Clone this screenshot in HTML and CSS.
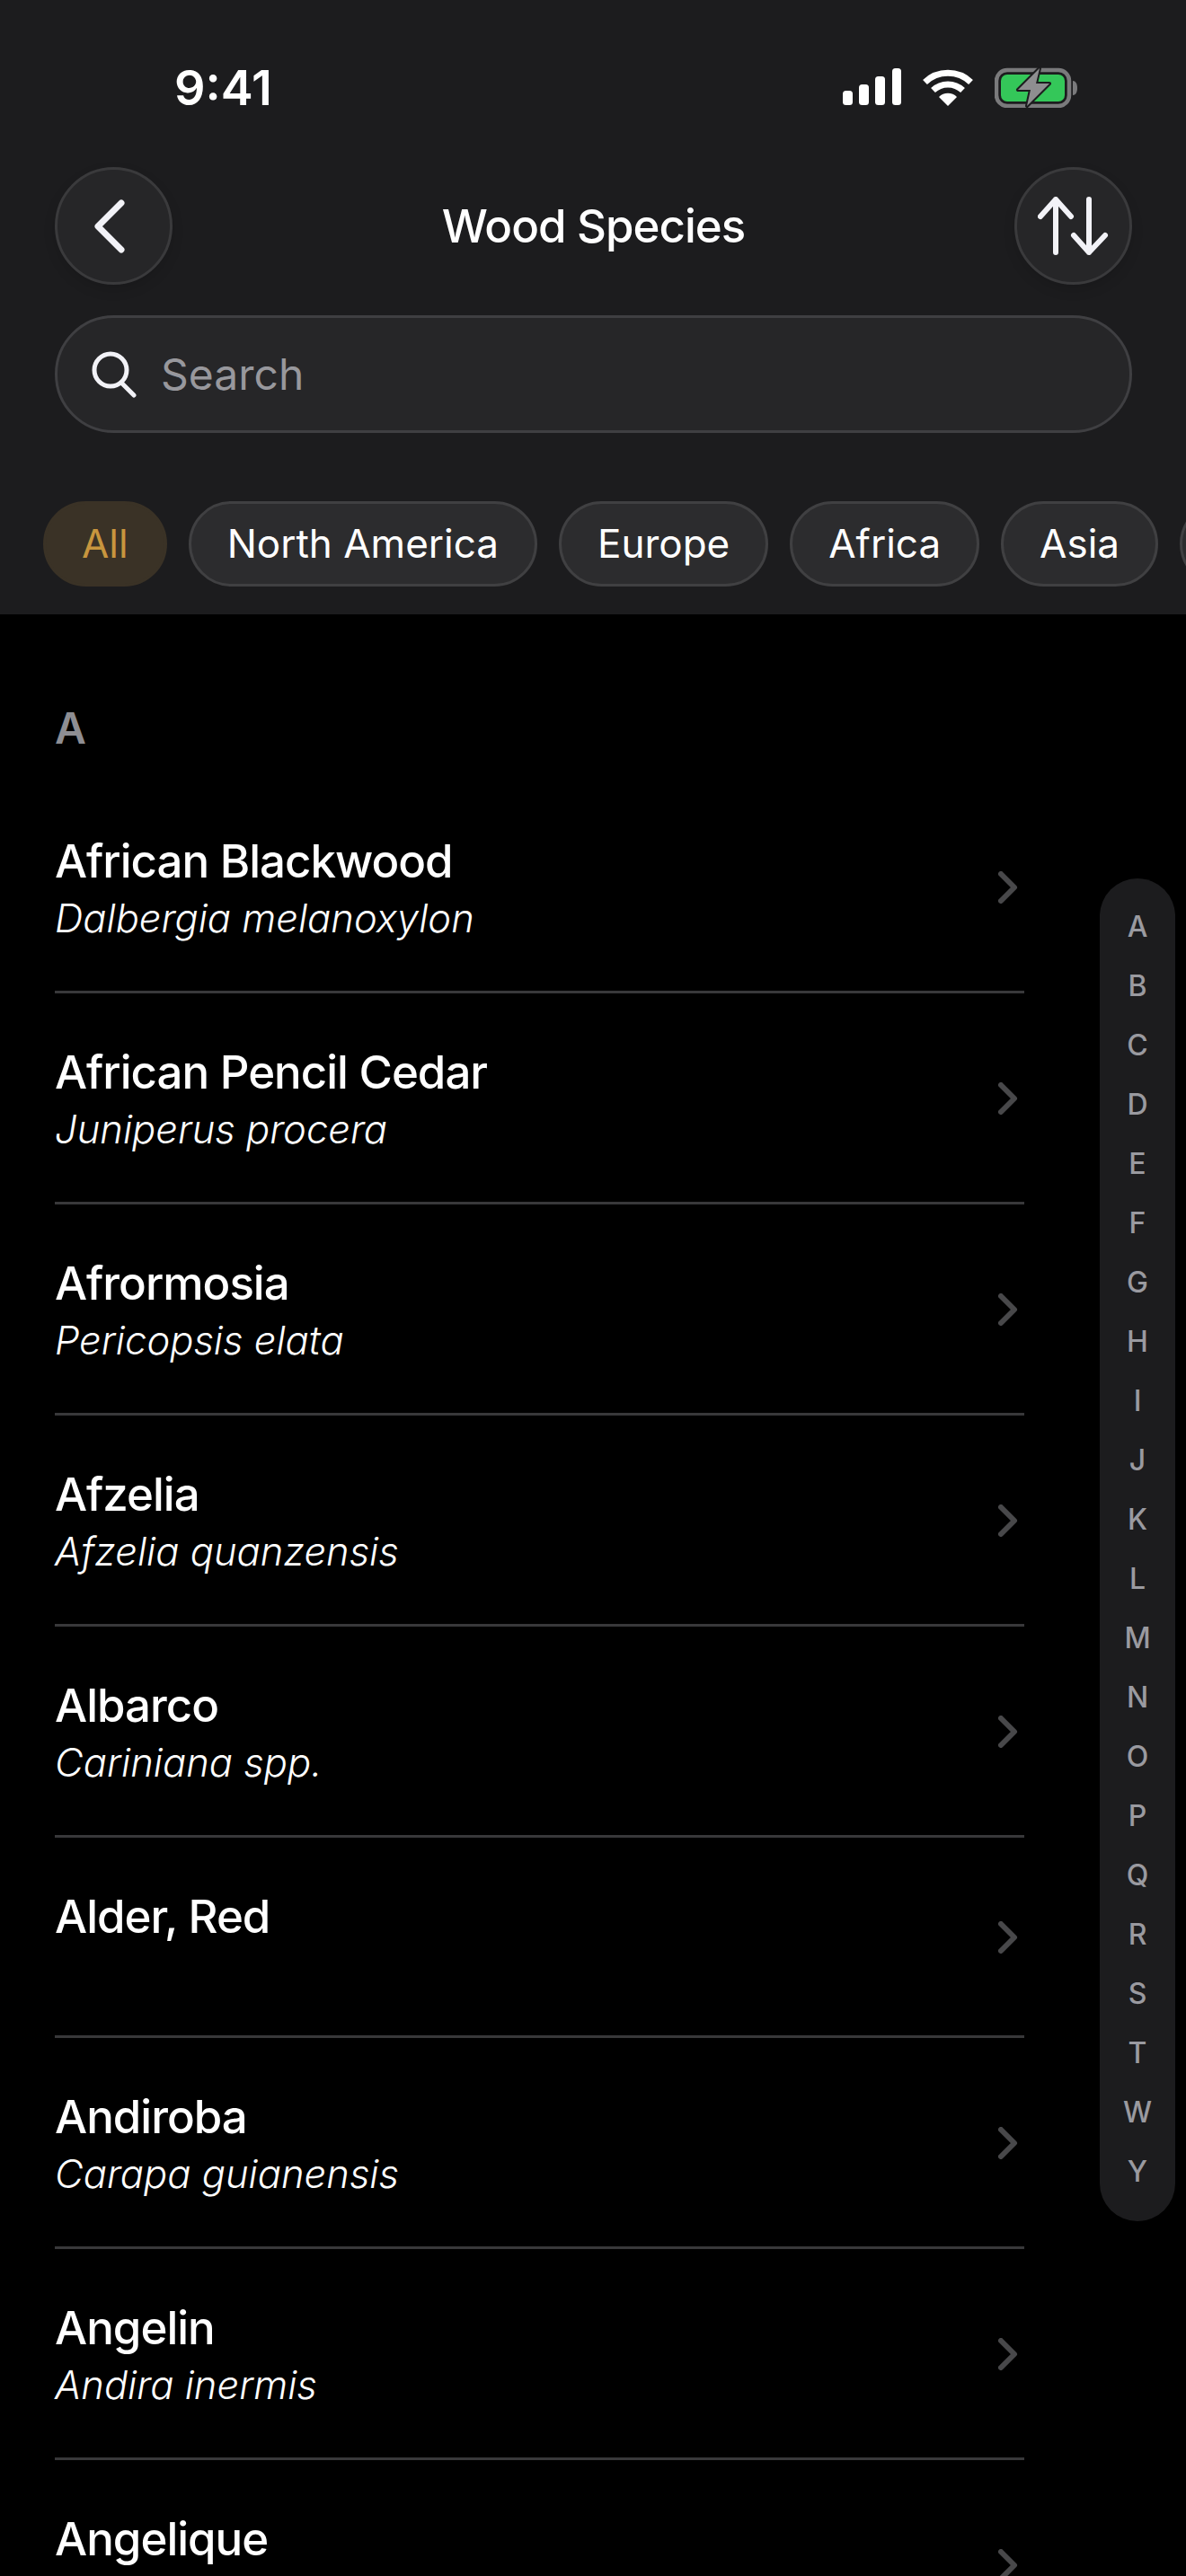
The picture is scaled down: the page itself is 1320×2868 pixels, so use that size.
FILE: index.html
```html
<!DOCTYPE html>
<html lang="en">

<head>
    <meta charset="UTF-8">
    <meta name="viewport" content="width=device-width, initial-scale=1.0">
    <title>Wood Species</title>
    <link rel="stylesheet" href="styles.css">
</head>

<body>
    <header class="header">
        <div class="status">
            <span class="time">9:41</span>
            <div class="status-icons">
                <svg class="signal" width="65" height="41" viewBox="0 0 65 41">
                    <rect x="0" y="25" width="11" height="16" rx="3.5" />
                    <rect x="18" y="18" width="11" height="23" rx="3.5" />
                    <rect x="36" y="9" width="11" height="32" rx="3.5" />
                    <rect x="55" y="0" width="10" height="41" rx="3.5" />
                </svg>
                <svg class="wifi" width="58" height="42" viewBox="0 0 58 42">
                    <path class="wifi-arc" d="M3.5 15.5A37 37 0 0 1 54.5 15.5" />
                    <path class="wifi-arc" d="M12.5 24.5A24 24 0 0 1 45.5 24.5" />
                    <path class="wifi-dot" d="M29 42L19 32A14 14 0 0 1 39 32Z" />
                </svg>
                <svg class="battery" width="92" height="46" viewBox="0 0 92 46">
                    <rect class="battery-case" x="2" y="4" width="81" height="40" rx="12" />
                    <rect class="battery-fill" x="7" y="9" width="71" height="30" rx="7" />
                    <path class="battery-nub" d="M87 16c3 0 5 3 5 8s-2 8-5 8Z" />
                    <path class="battery-bolt" d="M50 2L26 26H40L36 44L61 19H46Z" />
                </svg>
            </div>
        </div>

        <div class="nav">
            <button class="round-btn" aria-label="Back">
                <svg class="back-icon" width="40" height="62" viewBox="0 0 40 62">
                    <path d="M35 5L9 31L35 57" />
                </svg>
            </button>
            <h1 class="nav-title">Wood Species</h1>
            <button class="round-btn" aria-label="Sort">
                <svg width="79" height="65" viewBox="0 0 79 65">
                    <path d="M20 62V3M3 22L20 3L37 22" />
                    <path d="M57 3V62M40 43L57 62L75 43" />
                </svg>
            </button>
        </div>

        <div class="search">
            <svg width="50" height="52" viewBox="0 0 50 52">
                <circle cx="21" cy="21" r="18" />
                <path d="M33 35L47 49" />
            </svg>
            <span class="search-text">Search</span>
        </div>

        <div class="pills">
            <span class="pill pill-active">All</span>
            <span class="pill">North America</span>
            <span class="pill">Europe</span>
            <span class="pill">Africa</span>
            <span class="pill">Asia</span>
            <span class="pill pill-clipped"></span>
        </div>
    </header>

    <main class="list">
        <h2 class="section">A</h2>

        <div class="row">
            <div class="row-text">
                <div class="name">African Blackwood</div>
                <div class="latin">Dalbergia melanoxylon</div>
            </div>
            <svg class="chev" width="22" height="36" viewBox="0 0 22 36"><path d="M3 3L18 18L3 33" /></svg>
        </div>
        <div class="row">
            <div class="row-text">
                <div class="name">African Pencil Cedar</div>
                <div class="latin">Juniperus procera</div>
            </div>
            <svg class="chev" width="22" height="36" viewBox="0 0 22 36"><path d="M3 3L18 18L3 33" /></svg>
        </div>
        <div class="row">
            <div class="row-text">
                <div class="name">Afrormosia</div>
                <div class="latin">Pericopsis elata</div>
            </div>
            <svg class="chev" width="22" height="36" viewBox="0 0 22 36"><path d="M3 3L18 18L3 33" /></svg>
        </div>
        <div class="row">
            <div class="row-text">
                <div class="name">Afzelia</div>
                <div class="latin">Afzelia quanzensis</div>
            </div>
            <svg class="chev" width="22" height="36" viewBox="0 0 22 36"><path d="M3 3L18 18L3 33" /></svg>
        </div>
        <div class="row">
            <div class="row-text">
                <div class="name">Albarco</div>
                <div class="latin">Cariniana spp.</div>
            </div>
            <svg class="chev" width="22" height="36" viewBox="0 0 22 36"><path d="M3 3L18 18L3 33" /></svg>
        </div>
        <div class="row row-short">
            <div class="row-text">
                <div class="name">Alder, Red</div>
            </div>
            <svg class="chev" width="22" height="36" viewBox="0 0 22 36"><path d="M3 3L18 18L3 33" /></svg>
        </div>
        <div class="row">
            <div class="row-text">
                <div class="name">Andiroba</div>
                <div class="latin">Carapa guianensis</div>
            </div>
            <svg class="chev" width="22" height="36" viewBox="0 0 22 36"><path d="M3 3L18 18L3 33" /></svg>
        </div>
        <div class="row">
            <div class="row-text">
                <div class="name">Angelin</div>
                <div class="latin">Andira inermis</div>
            </div>
            <svg class="chev" width="22" height="36" viewBox="0 0 22 36"><path d="M3 3L18 18L3 33" /></svg>
        </div>
        <div class="row">
            <div class="row-text">
                <div class="name">Angelique</div>
            </div>
            <svg class="chev" width="22" height="36" viewBox="0 0 22 36"><path d="M3 3L18 18L3 33" /></svg>
        </div>

        <nav class="index">
            <span>A</span><span>B</span><span>C</span><span>D</span><span>E</span><span>F</span>
            <span>G</span><span>H</span><span>I</span><span>J</span><span>K</span><span>L</span>
            <span>M</span><span>N</span><span>O</span><span>P</span><span>Q</span><span>R</span>
            <span>S</span><span>T</span><span>W</span><span>Y</span>
        </nav>
    </main>
</body>

</html>
```

FILE: styles.css
```css
* {
    margin: 0;
    padding: 0;
    box-sizing: border-box;
}

html,
body {
    height: 2868px;
    overflow: hidden;
}

body {
    background: #000000;
    font-family: 'Inter', 'Liberation Sans', sans-serif;
    color: #ffffff;
}

.header {
    height: 684px;
    background: #1c1c1e;
    overflow: hidden;
}

.status {
    height: 186px;
    display: flex;
    justify-content: space-between;
    align-items: flex-start;
    padding: 73px 121px 0 194px;
}

.time {
    font-size: 54px;
    line-height: 50px;
    font-weight: 600;
}

.status-icons {
    display: flex;
    align-items: flex-start;
    gap: 23px;
    padding-top: 2px;
    margin-top: 1px;
}

.signal {
    fill: #ffffff;
}

.wifi-arc {
    fill: none;
    stroke: #ffffff;
    stroke-width: 7;
}

.wifi-dot {
    fill: #ffffff;
}

.battery {
    margin-top: -2px;
}

.battery-case {
    fill: none;
    stroke: #7a7a7c;
    stroke-width: 4.5;
}

.battery-fill {
    fill: #34c759;
}

.battery-nub {
    fill: #7a7a7c;
}

.battery-bolt {
    fill: #8e8e90;
    stroke: #1c1c1e;
    stroke-width: 4;
    stroke-linejoin: round;
    paint-order: stroke;
}

.nav {
    display: flex;
    justify-content: space-between;
    align-items: center;
    padding: 0 60px 0 61px;
}

.round-btn {
    width: 131px;
    height: 131px;
    border-radius: 50%;
    background: #262628;
    border: 3px solid #3a3a3c;
    box-shadow: 0 6px 14px rgba(0, 0, 0, 0.12);
    display: flex;
    justify-content: center;
    align-items: center;
}

.round-btn svg {
    fill: none;
    stroke: #f2f2f7;
    stroke-width: 6;
    stroke-linecap: round;
    stroke-linejoin: round;
}

.round-btn .back-icon {
    margin-right: 14px;
    stroke-width: 7;
}

.nav-title {
    font-size: 51px;
    line-height: 60px;
    font-weight: 550;
    letter-spacing: -1px;
}

.search {
    height: 131px;
    margin: 34px 60px 0 61px;
    border-radius: 66px;
    background: #262628;
    border: 3px solid #3f3f42;
    display: flex;
    align-items: center;
    gap: 27px;
    padding-left: 38px;
}

.search svg {
    fill: none;
    stroke: #f2f2f7;
    stroke-width: 5;
    stroke-linecap: round;
}

.search-text {
    font-size: 48px;
    color: #98989d;
}

.pills {
    display: flex;
    gap: 24px;
    margin-top: 76px;
    padding-left: 48px;
    white-space: nowrap;
}

.pill {
    height: 95px;
    padding: 0 40px;
    border-radius: 48px;
    background: #2c2c2e;
    border: 3px solid #404042;
    font-size: 44px;
    line-height: 89px;
}

.pill-active {
    background: #3a3226;
    border-color: #3a3226;
    color: #c8963e;
}

.pill-clipped {
    width: 120px;
    flex-shrink: 0;
}

.list {
    position: relative;
    padding-left: 61px;
}

.section {
    height: 187px;
    padding-top: 103px;
    font-size: 48px;
    line-height: 48px;
    font-weight: 600;
    color: #8e8e93;
}

.row {
    width: 1079px;
    height: 235px;
    padding: 58px 7px 0 0;
    display: flex;
    justify-content: space-between;
    border-bottom: 3px solid #38383a;
}

.row-short {
    height: 223px;
}

.name {
    font-size: 51px;
    line-height: 60px;
    font-weight: 550;
    letter-spacing: -1px;
}

.latin {
    margin-top: 4px;
    font-size: 43.5px;
    line-height: 58px;
    font-style: italic;
    font-weight: 300;
}

.chev {
    margin-top: 41px;
    fill: none;
    stroke: #48484a;
    stroke-width: 6;
    stroke-linecap: round;
    stroke-linejoin: round;
}

.row-short .chev {
    margin-top: 35px;
}

.index {
    position: absolute;
    top: 294px;
    right: 12px;
    width: 84px;
    padding: 21px 0 22px;
    border-radius: 42px;
    background: #1c1c1e;
    display: flex;
    flex-direction: column;
    align-items: center;
}

.index span {
    height: 66px;
    font-size: 32px;
    line-height: 66px;
    font-weight: 500;
    color: #9a9aa0;
}
```
